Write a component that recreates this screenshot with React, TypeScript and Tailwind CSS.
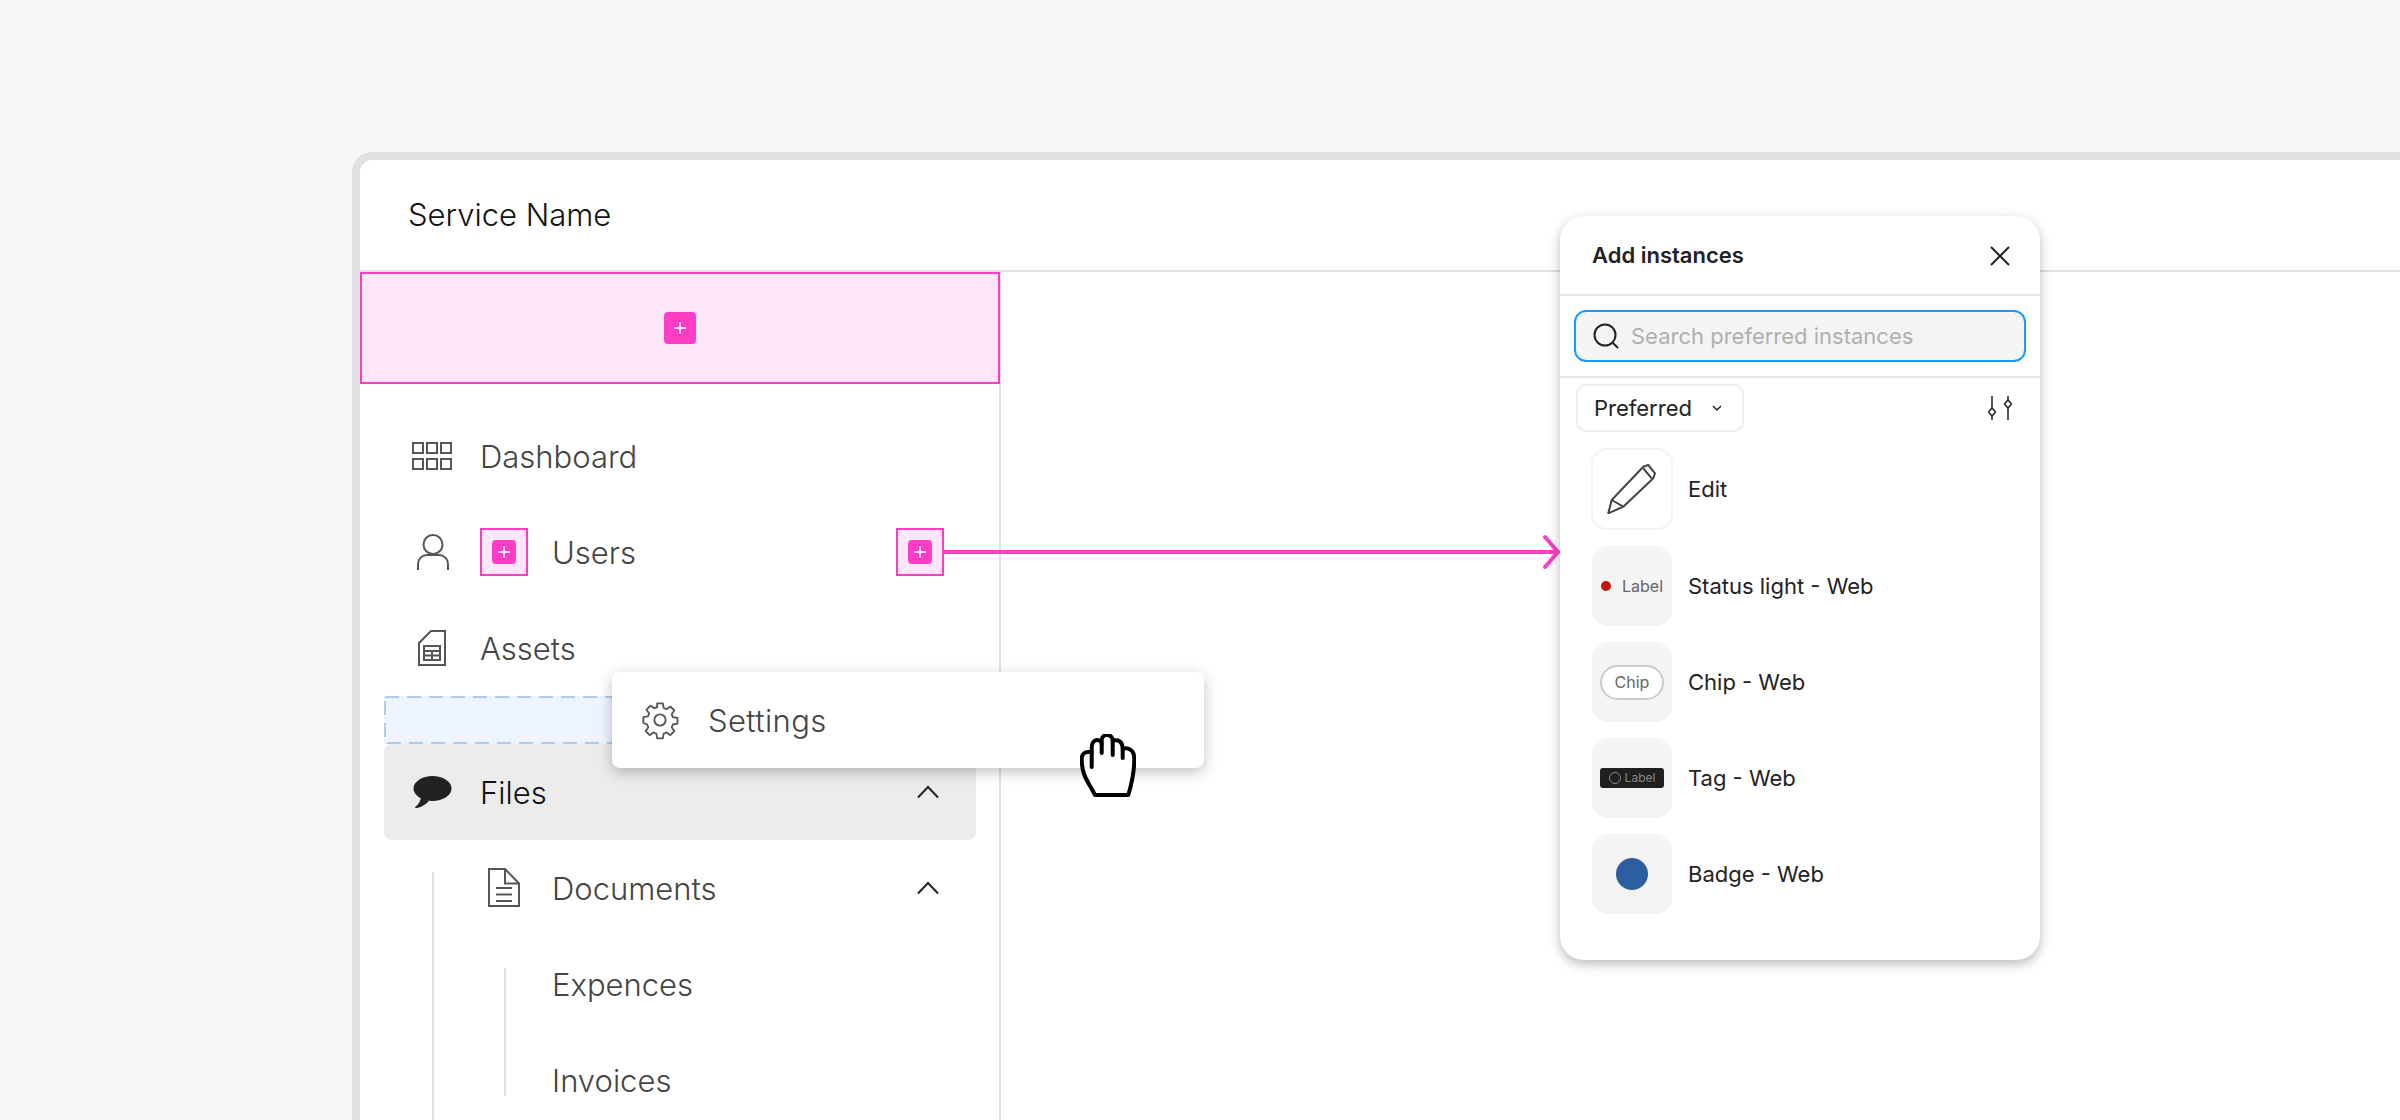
import React from 'react';

const PlusBox = ({ size = 'lg' }: { size?: 'lg' | 'sm' }) => (
  <div
    className={
      size === 'lg'
        ? 'flex h-8 w-8 items-center justify-center rounded bg-[#ff3dc4]'
        : 'flex h-6 w-6 items-center justify-center rounded bg-[#ff3dc4]'
    }
  >
    <svg width="14" height="14" viewBox="0 0 14 14" stroke="#fff" strokeWidth="1.6">
      <path d="M7 1v12M1 7h12" />
    </svg>
  </div>
);

const Slot = () => (
  <div className="flex h-12 w-12 items-center justify-center border-2 border-[#ff3dc4] bg-[#fde6fa]">
    <PlusBox size="sm" />
  </div>
);

const Chevron = () => (
  <svg width="24" height="14" viewBox="0 0 24 14" fill="none" stroke="#222" strokeWidth="2">
    <path d="M2 12.5 12 2l10 10.5" />
  </svg>
);

const GridIcon = () => (
  <svg width="40" height="28" viewBox="0 0 40 28" fill="none" stroke="#555" strokeWidth="2">
    <path d="M1 1h10v10H1zM15 1h10v10H15zM29 1h10v10H29zM1 17h10v10H1zM15 17h10v10H15zM29 17h10v10H29z" />
  </svg>
);

const UserIcon = () => (
  <svg width="32" height="36" viewBox="0 0 32 36" fill="none" stroke="#555" strokeWidth="2">
    <circle cx="16" cy="10.5" r="9.5" />
    <path d="M1 36v-6c0-5 4-9 9-9h12c5 0 9 4 9 9v6" />
  </svg>
);

const AssetIcon = () => (
  <svg width="28" height="36" viewBox="0 0 28 36" fill="none" stroke="#555" strokeWidth="2">
    <path d="M13 1h14v34H1V13z" />
    <path d="M6 16h16v14H6zM6 21h16M6 25.5h16M14 21v9" />
  </svg>
);

const ChatIcon = () => (
  <svg width="39" height="32" viewBox="0 0 39 32" fill="#222">
    <ellipse cx="19.5" cy="12.5" rx="19" ry="12.5" />
    <path d="M8 20C8 25 5 29 2 31c0 1 1 1 2 1 5-1 9-4 12-7z" />
  </svg>
);

const DocIcon = () => (
  <svg width="32" height="40" viewBox="0 0 32 40" fill="none" stroke="#555" strokeWidth="2">
    <path d="M1 1h16l14 14.5V38H1z" />
    <path d="M17 1v14.5h14M8 20h16M8 26.5h16M8 33h16" />
  </svg>
);

const Gear = () => (
  <svg width="40" height="40" viewBox="0 0 24 24" fill="none" stroke="#555" strokeWidth="1.1" strokeLinejoin="round">
    <circle cx="12" cy="12" r="3.4" />
    <path d="M10.3 2h3.4l.5 2.8 1.7.7 2.3-1.6 2.4 2.4-1.600 2.3.7 1.7 2.800.5v3.400l-2.800.5-.7 1.700 1.600 2.300-2.400 2.400-2.300-1.600-1.700.7-.5 2.800h-3.400l-.5-2.800-1.700-.7-2.300 1.600-2.400-2.400 1.600-2.300-.7-1.700L2 13.700v-3.400l2.800-.5.7-1.700-1.600-2.300 2.400-2.400 2.300 1.600 1.700-.7z" />
  </svg>
);

const Hand = () => (
  <svg width="56" height="64" viewBox="0 0 56 64" fill="#fff" stroke="#000" strokeWidth="4" strokeLinecap="round" strokeLinejoin="round">
    <path d="M15 61C11 53 6 46 4 40 2 34 1.700 30 1.700 25 1.700 20 5 18 8 18h3.700v-4C11.700 9 14 6 17 6c3 0 4.700 2 4.700 4V6C21.700 3 24 1 27 1c3 0 5.700 2 5.700 6 1.300-1 3.300-1 5.300-.5 3 1 4.700 4.500 4.700 8.500 2.300-1 5.300-1 7.300.5 3 1.500 4.300 4.500 4.300 9.500 0 13-3.300 27-6 36z" />
    <path d="M11.700 18v15M21.700 10v9M32.700 7v14M42.700 15v9" />
  </svg>
);

const navText = 'pt-[3px] font-["Inter",sans-serif] text-[31px] font-light text-[#444]';

const Instance = ({ label, children }: { label: string; children: React.ReactNode }) => (
  <div className="flex h-24 items-center gap-4 pl-8">
    <div className="flex h-20 w-20 items-center justify-center rounded-2xl bg-[#f4f4f4]">{children}</div>
    <span className="text-[22px] text-[#222]">{label}</span>
  </div>
);

export default function App() {
  return (
    <div className="relative h-[1120px] w-[2400px] overflow-hidden bg-[#f7f7f7] pl-[352px] pt-[152px]">
      <div className="h-[1000px] rounded-tl-[20px] border-l-8 border-t-8 border-[#e0e0e0] bg-white">
        <div className={'flex h-[112px] items-center border-b-2 border-[#e0e0e0] pl-12 font-["Inter",sans-serif] text-[31px] font-light text-[#111]'}>
          Service Name
        </div>
        <div className="h-full w-[641px] border-r-2 border-[#e0e0e0]">
          <div className="flex h-28 w-[640px] items-center justify-center border-2 border-[#ff3dc4] bg-[#fde6fa]">
            <PlusBox />
          </div>
          <div className="pt-6">
            <div className="flex h-24 items-center gap-7 pl-[52px]">
              <GridIcon />
              <span className={navText}>Dashboard</span>
            </div>
            <div className="flex h-24 items-center pl-[52px]">
              <div className="flex w-[68px] items-center justify-start pl-[5px]"><UserIcon /></div>
              <Slot />
              <span className={`${navText} ml-6`}>Users</span>
              <div className="ml-auto mr-[55px]"><Slot /></div>
            </div>
            <div className="flex h-24 items-center gap-[34px] pl-[58px]">
              <AssetIcon />
              <span className={navText}>Assets</span>
            </div>
            <div className="relative ml-6 h-12 w-[592px] bg-[#edf4ff]">
              <svg className="absolute inset-0" width="592" height="48" fill="none" stroke="#b0cbeb" strokeWidth="2" strokeDasharray="14 8">
                <rect x="1" y="1" width="590" height="46" />
              </svg>
            </div>
            <div className="ml-6 flex h-24 w-[592px] items-center gap-7 rounded-lg bg-[#ececec] pl-[29px] pr-9">
              <ChatIcon />
              <span className={'pt-[3px] font-["Inter",sans-serif] text-[31px] font-light text-[#111]'}>Files</span>
              <div className="ml-auto"><Chevron /></div>
            </div>
            <div className="relative ml-[72px] h-[300px] w-[520px]">
              <div className="absolute bottom-0 left-0 top-8 border-l-2 border-[#e0e0e0]" />
              <div className="flex h-24 items-center gap-8 pl-14 pr-3">
                <DocIcon />
                <span className={navText}>Documents</span>
                <div className="ml-auto"><Chevron /></div>
              </div>
              <div className="ml-[72px] mt-8 h-32 border-l-2 border-[#e0e0e0] pl-[46px]">
                <div className={`${navText} flex h-8 items-center`}>Expences</div>
                <div className={`${navText} mt-16 flex h-8 items-center`}>Invoices</div>
              </div>
            </div>
          </div>
        </div>
      </div>

      {/* pink connector */}
      <svg className="absolute left-[944px] top-[534px]" width="620" height="36" viewBox="0 0 620 36" fill="none" stroke="#ff3dc4" strokeWidth="4" strokeLinecap="round">
        <path d="M0 18h614M601 3l13 15-13 15" />
      </svg>

      {/* dragged item */}
      <div className="absolute left-[612px] top-[672px] flex h-24 w-[592px] items-center gap-[28px] rounded-lg bg-white pl-7 shadow-[0_4px_14px_rgba(0,0,0,0.25)]">
        <Gear />
        <span className={`${navText} tracking-[0.4px]`}>Settings</span>
      </div>
      <div className="absolute left-[1080px] top-[734px]">
        <Hand />
      </div>

      {/* instances panel */}
      <div className={'absolute left-[1560px] top-[216px] h-[744px] w-[480px] rounded-3xl bg-white font-["Inter",sans-serif] shadow-[0_4px_12px_rgba(0,0,0,0.28)]'}>
        <div className="flex h-20 items-center justify-between border-b-2 border-[#e5e5e5] pl-8 pr-[30px] pt-px">
          <span className="text-[22px] font-semibold text-[#222]">Add instances</span>
          <svg width="20" height="20" viewBox="0 0 20 20" stroke="#222" strokeWidth="2">
            <path d="M1 1l18 18M19 1 1 19" />
          </svg>
        </div>
        <div className="flex h-[82px] items-start justify-center border-b-2 border-[#e5e5e5] pt-3.5">
          <div className="flex h-[52px] w-[452px] items-center gap-3 rounded-xl border-2 border-[#1a9bff] bg-[#f4f4f4] pl-[17px]">
            <svg width="26" height="26" viewBox="0 0 26 26" fill="none" stroke="#222" strokeWidth="2">
              <circle cx="12" cy="12" r="10.5" />
              <path d="M20 20l5 5" />
            </svg>
            <span className="text-[22px] text-[#b0b0b0]">Search preferred instances</span>
          </div>
        </div>
        <div className="flex items-center justify-between pl-4 pr-7 pt-1.5">
          <div className="flex h-12 w-[168px] items-center gap-5 rounded-[10px] border-2 border-[#eee] pl-4">
            <span className="text-[22px] text-[#222]">Preferred</span>
            <svg width="10" height="7" viewBox="0 0 10 7" fill="none" stroke="#222" strokeWidth="1.5">
              <path d="M1 1l4 4 4-4" />
            </svg>
          </div>
          <svg width="24" height="24" viewBox="0 0 24 24" fill="none" stroke="#222" strokeWidth="1.5">
            <path d="M4 0v12M4 20v4M20 0v4M20 12v12" />
            <path d="M4 12l3.5 4-3.5 4-3.5-4zM20 4l3.5 4-3.5 4-3.5-4z" />
          </svg>
        </div>
        <div className="pt-4">
          <div className="flex h-[82px] items-center gap-[15px] pl-[31px]">
            <div className="flex h-[82px] w-[82px] items-center justify-center rounded-2xl border-2 border-[#f3f3f3]">
              <svg width="50" height="50" viewBox="0 0 50 50" fill="none" stroke="#444" strokeWidth="2" strokeLinejoin="round">
                <path d="M1.300 49.300 4.700 36 36.300 2.700 41.300 1 48 9.300l-1.700 5-30 28.400z" />
                <path d="M36.300 4.300l8.400 10M4.700 36l11.600 6.700" />
              </svg>
            </div>
            <span className="text-[22px] text-[#222]">Edit</span>
          </div>
          <div className="h-2" />
          <Instance label="Status light - Web">
            <span className="mr-[11px] h-2.5 w-2.5 rounded-full bg-[#c4160c]" />
            <span className="text-base text-[#666]">Label</span>
          </Instance>
          <Instance label="Chip - Web">
            <span className="flex h-[35px] w-16 items-center justify-center rounded-full border-2 border-[#ccc] bg-white text-base text-[#666]">Chip</span>
          </Instance>
          <Instance label="Tag - Web">
            <span className="flex h-5 w-16 items-center justify-center gap-1 rounded-[3px] bg-[#1f1f1f] text-xs text-[#888]">
              <span className="h-3 w-3 rounded-full border border-[#888]" />
              Label
            </span>
          </Instance>
          <Instance label="Badge - Web">
            <span className="h-8 w-8 rounded-full bg-[#2b5fa0]" />
          </Instance>
        </div>
      </div>
    </div>
  );
}
